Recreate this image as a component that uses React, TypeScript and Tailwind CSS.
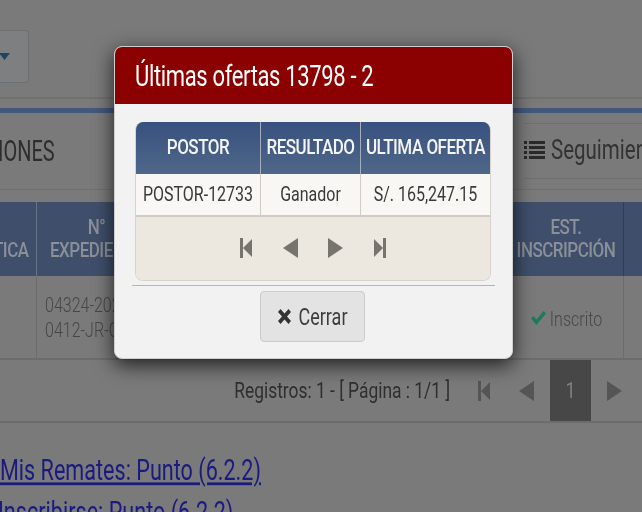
import React from "react";

const T = ({ children, className = "scale-y-[1.22]" }: { children: React.ReactNode; className?: string }) => (
  <span className={"inline-block whitespace-nowrap " + className}>{children}</span>
);

const First = ({ c = "#77736d", w = 12, h = 20 }: { c?: string; w?: number; h?: number }) => (
  <svg width={w} height={h} viewBox="0 0 12 20" fill={c}><rect x="0" y="0" width="3" height="20" /><path d="M12 1V19L3 10Z" /></svg>
);
const Last = ({ c = "#77736d", w = 12, h = 20 }: { c?: string; w?: number; h?: number }) => (
  <svg width={w} height={h} viewBox="0 0 12 20" fill={c}><rect x="9" y="0" width="3" height="20" /><path d="M0 1V19L9 10Z" /></svg>
);
const Prev = ({ c = "#77736d" }: { c?: string }) => (
  <svg width="15" height="20" viewBox="0 0 15 20" fill={c}><path d="M15 0V20L0 10Z" /></svg>
);
const Next = ({ c = "#77736d" }: { c?: string }) => (
  <svg width="15" height="20" viewBox="0 0 15 20" fill={c}><path d="M0 0V20L15 10Z" /></svg>
);

export default function App() {
  return (
    <div className="relative w-[642px] h-[512px] overflow-hidden bg-[#7a7a7a] font-['Roboto',sans-serif] text-[#333] blur-[0.35px]">
      {/* top bar */}
      <div className="h-[99px] pt-[30px] border-b-2 border-[#707070]">
        <div className="w-[29px] h-[53px] flex items-center justify-end pr-[18px] rounded-r-[4px] border border-l-0 border-[#6c6f72] bg-[#7d7f81]">
          <svg width="11" height="7" viewBox="0 0 11 7" fill="#1f4560" className="shrink-0"><path d="M0 0H11L5.5 7Z" /></svg>
        </div>
      </div>
      <div className="h-[9px]" />
      <div className="h-[5px] bg-[#44587c]" />
      {/* tabs */}
      <div className="h-[77px] flex items-center justify-between border-b border-[#707070]">
        <div className="-ml-[41px] text-[20px] leading-none text-[#2e2e2e]"><T className="scale-y-[1.46]">ACCIONES</T></div>
        <div className="w-[118px] h-[56px] flex items-center gap-[6px] overflow-hidden border-y border-[#707070] mt-[-1px]">
          <svg width="21" height="21" viewBox="0 0 21 21" fill="#2a2a2a" className="shrink-0">
            <rect x="0" y="1" width="3" height="3" /><rect x="5" y="1" width="16" height="3" />
            <rect x="0" y="6" width="3" height="3" /><rect x="5" y="6" width="16" height="3" />
            <rect x="0" y="11" width="3" height="3" /><rect x="5" y="11" width="16" height="3" />
            <rect x="0" y="16" width="3" height="3" /><rect x="5" y="16" width="16" height="3" />
          </svg>
          <span className="text-[20.5px] leading-none text-[#333]"><T className="scale-y-[1.36]">Seguimiento</T></span>
        </div>
      </div>
      <div className="h-[12px]" />
      {/* table */}
      <div className="flex h-[74px] bg-[#3f4f6b] text-[#8a8f98] text-[17px] font-medium leading-[23px]">
        <div className="-ml-[40px] w-[77px] shrink-0 border-r border-[#6a7488] flex flex-col items-center justify-center tracking-[-0.5px] pr-[26px]">
          <T>DE</T><T>AUTENTICA</T>
        </div>
        <div className="w-[130px] shrink-0 border-r border-[#6a7488] flex flex-col items-center justify-center tracking-[-0.5px] pr-[10px]">
          <T>N°</T><T>EXPEDIENTE</T>
        </div>
        <div className="flex-1" />
        <div className="w-[112px] shrink-0 border-r border-[#2f3d55] flex flex-col items-center justify-center tracking-[-0.5px] pr-[3px]">
          <T>EST.</T><T>INSCRIPCIÓN</T>
        </div>
        <div className="w-[18px] shrink-0" />
      </div>
      <div className="flex h-[84px] border-b-2 border-[#6c6c6c] text-[16px] leading-[25px] text-[#474747] font-light">
        <div className="-ml-[40px] w-[77px] shrink-0 border-r border-[#6c6c6c]" />
        <div className="w-[130px] shrink-0 border-r border-[#6c6c6c] pl-[8px] flex flex-col justify-center overflow-hidden pt-[2px]">
          <T className="scale-y-[1.25]">04324-2023-0-</T><T className="scale-y-[1.25]">0412-JR-CI-01</T>
        </div>
        <div className="flex-1" />
        <div className="w-[112px] shrink-0 border-r border-[#6c6c6c] flex items-center justify-center gap-[4px] pt-[2px] pr-[2px]">
          <svg width="15" height="14" viewBox="0 0 15 14" fill="#1f7a5a" className="shrink-0"><path d="M0 7.5L2.5 5L5.5 8.5L12.5 0L15 2.5L5.5 14Z" /></svg>
          <T className="scale-y-[1.3]">Inscrito</T>
        </div>
        <div className="w-[18px] shrink-0" />
      </div>
      {/* pagination */}
      <div className="h-[63px] flex items-center justify-end border-b-2 border-[#6c6c6c]">
        <span className="text-[17.4px] text-[#2f2f2f] leading-none mr-[28px]"><T className="scale-y-[1.32]">Registros: 1 - [ Página : 1/1 ]</T></span>
        <span className="mr-[29px]"><First c="#555" /></span>
        <span className="mr-[16px]"><Prev c="#555" /></span>
        <span className="w-[41px] h-[61px] bg-[#474747] flex items-center justify-center text-[#7f7f7f] text-[18px]"><T>1</T></span>
        <span className="ml-[16px] mr-[20px]"><Next c="#555" /></span>
      </div>
      {/* links */}
      <div className="pt-[26px] text-[21.6px] leading-[42px] text-[#1a1a80]">
        <div><T className="scale-y-[1.38] underline">Mis Remates: Punto (6.2.2)</T></div>
        <div className="-ml-[2px]"><T className="scale-y-[1.38] underline">Inscribirse: Punto (6.2.2)</T></div>
      </div>

      {/* modal */}
      <div className="absolute left-[114px] top-[46px] w-[399px] h-[313px] rounded-[8px] bg-[#f2f2f2] shadow-[0_6px_20px_rgba(0,0,0,0.75)] overflow-hidden border border-[#cfcfcf]">
        <div className="h-[57px] bg-[#8b0000] flex items-center pl-[20px] text-white text-[22px] leading-none">
          <T className="scale-y-[1.36] tracking-[-0.35px]">Últimas ofertas 13798 - 2</T>
        </div>
        <div className="px-[20px] pt-[18px]">
          <div className="w-[356px] rounded-[8px] overflow-hidden border-x border-b border-[#d6d3cc]">
            <div className="flex h-[52px] bg-gradient-to-b from-[#38517f] to-[#4f6788] text-[#f4f4f4] text-[17px] font-medium tracking-[-0.5px]">
              <div className="w-[125px] border-r border-[#a3adbd] flex items-center justify-center"><T>POSTOR</T></div>
              <div className="w-[100px] border-r border-[#a3adbd] flex items-center justify-center"><T>RESULTADO</T></div>
              <div className="flex-1 flex items-center justify-center"><T>ULTIMA OFERTA</T></div>
            </div>
            <div className="flex h-[43px] bg-[#f9f7f3] border-b-2 border-[#cfccc5] text-[16px] text-[#3a3a3a]">
              <div className="w-[125px] border-r border-[#cfccc5] flex items-center justify-center pt-[1px]"><T>POSTOR-12733</T></div>
              <div className="w-[100px] border-r border-[#cfccc5] flex items-center justify-center pt-[1px]"><T>Ganador</T></div>
              <div className="flex-1 flex items-center justify-center pt-[1px]"><T>S/. 165,247.15</T></div>
            </div>
            <div className="h-[63px] bg-[#ece8e0] flex items-center justify-center pb-[1px] pr-[1px]">
              <span className="mr-[31px]"><First /></span>
              <span className="mr-[30px]"><Prev /></span>
              <span className="mr-[31px]"><Next /></span>
              <Last />
            </div>
          </div>
        </div>
        <div className="mx-[17px] mt-[4px] h-px bg-[#b5b5b5]" />
        <div className="flex justify-center mt-[5px] pr-[2px]">
          <button className="w-[105px] h-[51px] rounded-[4px] bg-[#e3e3e3] border border-[#cccccc] flex items-center justify-center gap-[8px] text-[#3d3d3d] text-[18px] leading-none">
            <svg width="13" height="15" viewBox="0 0 13 15" fill="#333" className="shrink-0"><path d="M0 3L2.5 0L6.5 4.5L10.5 0L13 3L9 7.5L13 12L10.5 15L6.5 10.5L2.5 15L0 12L4 7.5Z" /></svg>
            <T className="scale-y-[1.36]">Cerrar</T>
          </button>
        </div>
      </div>
    </div>
  );
}
